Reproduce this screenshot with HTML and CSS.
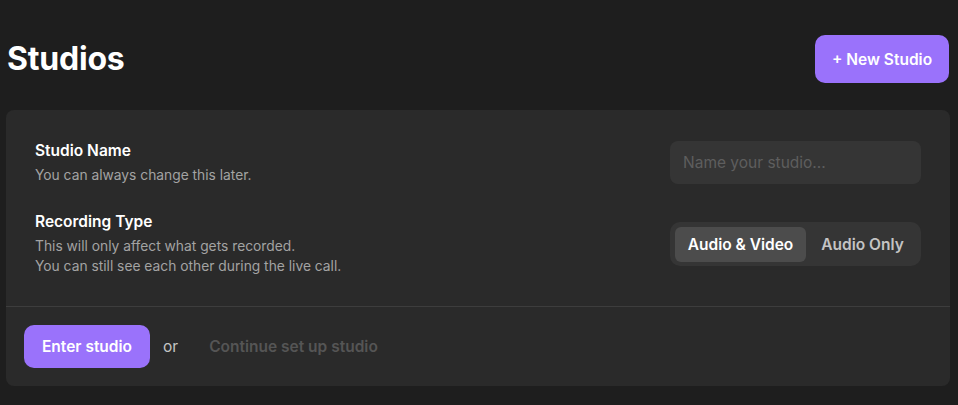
FILE: index.html
```html
<!DOCTYPE html>
<html>
<head>
<meta charset="utf-8">
<link rel="stylesheet" href="styles.css">
</head>
<body>
<div class="page">
  <header class="top">
    <h1 class="title">Studios</h1>
    <button class="btn btn-primary btn-new">+ New Studio</button>
  </header>
  <section class="card">
    <div class="card-body">
      <div class="row">
        <div class="info">
          <div class="label">Studio Name</div>
          <div class="desc">You can always change this later.</div>
        </div>
        <div class="input">Name your studio...</div>
      </div>
      <div class="row">
        <div class="info">
          <div class="label">Recording Type</div>
          <div class="desc">This will only affect what gets recorded.<br>You can still see each other during the live call.</div>
        </div>
        <div class="segmented">
          <div class="seg seg-active">Audio &amp; Video</div>
          <div class="seg">Audio Only</div>
        </div>
      </div>
    </div>
    <div class="card-foot">
      <button class="btn btn-primary btn-enter">Enter studio</button>
      <span class="or">or</span>
      <span class="continue">Continue set up studio</span>
    </div>
  </section>
</div>
</body>
</html>
```
FILE: styles.css
```css
* { box-sizing: border-box; }
html, body { margin: 0; padding: 0; }
body {
  background: #1e1e1e;
  font-family: Inter, "Noto Sans", sans-serif;
  color: #fff;
  width: 958px;
  height: 405px;
  overflow: hidden;
}
.page {
  padding: 35px 8px 0 6px;
}
.top {
  display: flex;
  justify-content: space-between;
  align-items: center;
  height: 48px;
  margin-bottom: 27px;
}
.title {
  margin: 0 0 0 1px;
  font-size: 32px;
  font-weight: 700;
  letter-spacing: -0.2px;
  line-height: 1;
}
.btn {
  border: none;
  font-family: inherit;
  color: #fff;
  cursor: pointer;
}
.btn-primary {
  background: #9a72fb;
  font-weight: 600;
}
.btn-new {
  width: 134px;
  height: 48px;
  margin-right: 1px;
  border-radius: 10px;
  font-size: 15.5px;
}
.card {
  background: #2a2a2a;
  border-radius: 8px;
}
.card-body {
  padding: 30px 29px 30px 29px;
  display: flex;
  flex-direction: column;
  gap: 26px;
  border-bottom: 1px solid #3d3d3d;
}
.row {
  display: flex;
  justify-content: space-between;
  align-items: center;
}
.label {
  font-size: 15.5px;
  font-weight: 600;
  line-height: 22px;
  margin-bottom: 3px;
}
.desc {
  font-size: 13.8px;
  color: #a3a3a3;
  line-height: 20px;
}
.input {
  width: 251px;
  height: 43px;
  background: #353535;
  border-radius: 8px;
  padding: 0 13px;
  display: flex;
  align-items: center;
  font-size: 15.5px;
  color: #5e5e5e;
}
.segmented {
  width: 251px;
  height: 44px;
  background: #353535;
  border-radius: 10px;
  padding: 5px 5px 4px 5px;
  display: flex;
  align-items: stretch;
}
.seg {
  display: flex;
  align-items: center;
  justify-content: center;
  font-size: 15.5px;
  font-weight: 600;
  color: #c4c4c4;
  border-radius: 6px;
}
.seg-active {
  background: #4c4c4c;
  color: #fff;
  width: 131px;
}
.seg:not(.seg-active) { flex: 1; padding-left: 3px; }
.card-foot {
  display: flex;
  align-items: center;
  padding: 18px 18px;
}
.btn-enter {
  width: 126px;
  height: 43px;
  border-radius: 10px;
  font-size: 15.5px;
}
.or {
  margin-left: 13px;
  font-size: 15.5px;
  color: #c4c4c4;
}
.continue {
  margin-left: 31px;
  font-size: 15.5px;
  font-weight: 600;
  color: #555555;
}
```
